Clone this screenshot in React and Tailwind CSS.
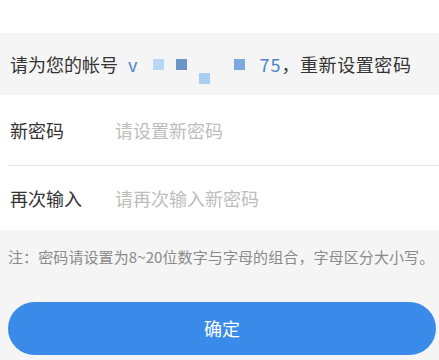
import React from "react";

export default function App() {
  return (
    <div
      className="w-[439px] h-[360px] bg-[#f5f5f5] overflow-hidden flex flex-col"
      style={{ fontFamily: '"Noto Sans CJK SC", "Noto Sans", sans-serif' }}
    >
      {/* top white strip */}
      <div className="h-[33px] bg-white" />

      {/* account line */}
      <div className="h-[62px] flex items-center pl-[10px] text-[18px] text-[#333] whitespace-nowrap">
        <span>请为您的帐号</span>
        <span className="ml-[10px] text-[#4a86c8]">v</span>
        <span className="ml-[16px] inline-block w-[11px] h-[11px] bg-[#b8d7f6]" />
        <span className="ml-[12px] inline-block w-[11px] h-[11px] bg-[#6a95c9]" />
        <span className="ml-[12px] inline-block w-[11px] h-[11px] bg-[#a9cff3] translate-y-[14px]" />
        <span className="ml-[24px] inline-block w-[11px] h-[11px] bg-[#7aaae0]" />
        <span className="ml-[14px] text-[#4a86c8] tracking-[1px]">75</span>
        <span className="tracking-[0.6px]">，重新设置密码</span>
      </div>

      {/* form */}
      <div className="bg-white">
        <div className="h-[70px] flex items-center pl-[10px] text-[18px]">
          <span className="w-[105px] text-[#333]">新密码</span>
          <span className="text-[#bdbdbd]">请设置新密码</span>
        </div>
        <div className="ml-[8px] h-px bg-[#e6e6e6]" />
        <div className="h-[64px] flex items-center pl-[10px] text-[18px]">
          <span className="w-[105px] text-[#333]">再次输入</span>
          <span className="text-[#bdbdbd]">请再次输入新密码</span>
        </div>
      </div>

      {/* note */}
      <div className="pt-[16px] pl-[8px] text-[15px] text-[#8a8a8a] whitespace-nowrap tracking-[0.1px]">
        注：密码请设置为8~20位数字与字母的组合，字母区分大小写。
      </div>

      {/* button */}
      <div className="px-[8px] pt-[33px]">
        <button className="w-[428px] h-[53px] rounded-full bg-[#3a8be9] text-white text-[18px] flex items-center justify-center">
          确定
        </button>
      </div>
    </div>
  );
}
